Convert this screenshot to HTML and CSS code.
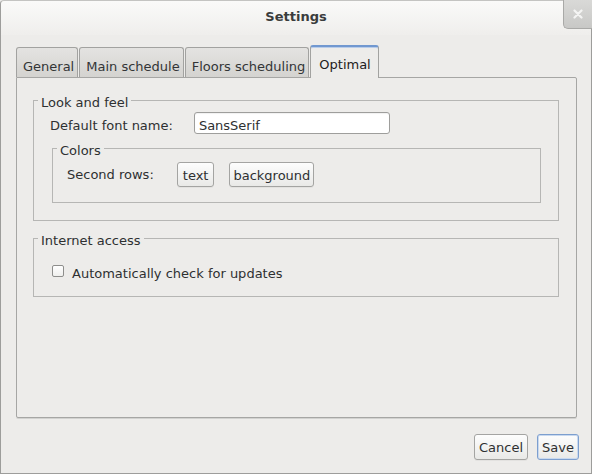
FILE: index.html
```html
<!DOCTYPE html>
<html>
<head>
<meta charset="utf-8">
<link rel="stylesheet" href="styles.css">
</head>
<body>
<div class="window">
  <div class="titlebar">
    <span class="title">Settings</span>
    <button class="close" aria-label="Close">
      <svg width="10" height="10" viewBox="0 0 10 10"><path d="M1.5 1.5 L8.5 8.5 M8.5 1.5 L1.5 8.5" stroke="#f4f4f3" stroke-width="2.2" stroke-linecap="round"/></svg>
    </button>
  </div>
  <div class="main">
    <div class="tabs">
      <div class="tab">General</div>
      <div class="tab">Main schedule</div>
      <div class="tab">Floors scheduling</div>
      <div class="tab active">Optimal</div>
    </div>
    <div class="panel">
      <div class="group look">
        <div class="legend">Look and feel</div>
        <div class="row font-row">
          <span class="label">Default font name:</span>
          <input class="field" type="text" value="SansSerif">
        </div>
        <div class="group colors">
          <div class="legend">Colors</div>
          <div class="row colors-row">
            <span class="label">Second rows:</span>
            <button class="btn btn-text">text</button>
            <button class="btn btn-bg">background</button>
          </div>
        </div>
      </div>
      <div class="group internet">
        <div class="legend">Internet access</div>
        <label class="row check-row">
          <input class="check" type="checkbox">
          <span class="check-label">Automatically check for updates</span>
        </label>
      </div>
    </div>
  </div>
  <div class="actions">
    <button class="btn">Cancel</button>
    <button class="btn primary">Save</button>
  </div>
</div>
</body>
</html>
```
FILE: styles.css
```css
* { box-sizing: border-box; }
html, body { margin: 0; padding: 0; background: #edecea; }
body {
  font-family: "DejaVu Sans", sans-serif;
  font-size: 13px;
  line-height: 15px;
  color: #2e3031;
}
.window {
  position: relative;
  width: 592px;
  height: 474px;
  background: #edecea;
  border: 1px solid #9d9d9b;
  border-top-color: #c4c4c2;
  border-radius: 4px 4px 0 0;
  display: flex;
  flex-direction: column;
}
.titlebar {
  height: 34px;
  display: flex;
  justify-content: center;
  align-items: center;
  background: linear-gradient(#fafaf9, #efeeec);
  border-radius: 4px 4px 0 0;
}
.title {
  font-weight: bold;
  color: #3a3c3c;
  line-height: 15px;
  margin-top: -3px;
}
.close {
  position: absolute;
  top: -1px;
  right: -1px;
  width: 29px;
  height: 29px;
  padding: 0;
  border: 1px solid #a9a9a7;
  border-top: none;
  border-right: none;
  border-radius: 0 0 0 5px;
  background: linear-gradient(#d9d9d7, #c8c8c6);
  display: flex;
  align-items: center;
  justify-content: center;
}
.main {
  padding: 10px 14px 0 15px;
  display: flex;
  flex-direction: column;
}
.tabs {
  display: flex;
  align-items: flex-end;
  height: 32px;
  gap: 1px;
  position: relative;
  z-index: 1;
}
.tab {
  height: 30px;
  padding: 11px 3px 0 6px;
  border: 1px solid #a2a2a0;
  border-bottom: none;
  border-radius: 3px 3px 0 0;
  background: linear-gradient(#e4e3e1, #d4d3d0);
  color: #333536;
  white-space: nowrap;
}
.tab.active {
  height: 33px;
  margin-bottom: -1px;
  padding: 10px 7px 0 8px;
  background: #edecea;
  border-top: 2px solid #7198d0;
  box-shadow: inset 0 1px 0 #b9cdea;
  color: #1e2020;
}
.panel {
  height: 341px;
  border: 1px solid #a6a6a4;
  border-radius: 0 2px 2px 2px;
  box-shadow: 0 1px 0 #d2d2d0;
  padding: 22px 17px 0 16px;
  display: flex;
  flex-direction: column;
}
.group {
  border: 1px solid #b6b6b4;
  display: flex;
  flex-direction: column;
}
.legend {
  width: fit-content;
  margin: -6px 0 0 4px;
  padding: 0 3px;
  background: #edecea;
  line-height: 15px;
  white-space: nowrap;
}
.row { display: flex; }
.look { padding: 0 17px 17px 0; }
.font-row {
  margin-top: 2px;
  padding-left: 16px;
  align-items: baseline;
}
.font-row .label { margin-right: 21px; }
.field {
  width: 196px;
  height: 22px;
  padding: 4px 4px 0 4px;
  border: 1px solid #9e9e9c;
  border-radius: 3px;
  background: #ffffff;
  font: inherit;
  line-height: 15px;
  color: #2e3031;
  box-shadow: inset 0 1px 1px rgba(0,0,0,0.06);
}
.colors {
  margin: 14px 0 0 18px;
  padding-bottom: 15px;
}
.colors-row {
  margin-top: 4px;
  padding-left: 14px;
  align-items: center;
}
.colors-row .label { margin-right: 23px; }
.btn {
  height: 26px;
  padding: 0 4px;
  border: 1px solid #a4a4a2;
  border-radius: 3px;
  background: linear-gradient(#fdfdfd, #e9e9e7);
  font: inherit;
  line-height: 15px;
  color: #2e3031;
  box-shadow: 0 1px 0 rgba(0,0,0,0.04);
}
.colors-row .btn { height: 25px; padding-top: 1px; }
.btn-text { padding: 0 5px; margin-right: 15px; }
.btn-bg { padding: 0 3px; }
.internet {
  margin-top: 17px;
  padding-bottom: 15px;
}
.check-row {
  margin-top: 16px;
  padding-left: 18px;
  align-items: flex-start;
}
.check {
  appearance: none;
  -webkit-appearance: none;
  width: 12px;
  height: 12px;
  margin: 1px 8px 0 0;
  border: 1px solid #8e8e8c;
  border-radius: 2px;
  background: linear-gradient(#ffffff, #efefed);
}
.check-label { margin-top: 2px; }
.actions {
  display: flex;
  justify-content: flex-end;
  gap: 9px;
  padding: 16px 12px 0 0;
}
.primary {
  border-color: #7d9fcf;
  box-shadow: inset 0 0 0 1px #c9d9ef;
}
```
